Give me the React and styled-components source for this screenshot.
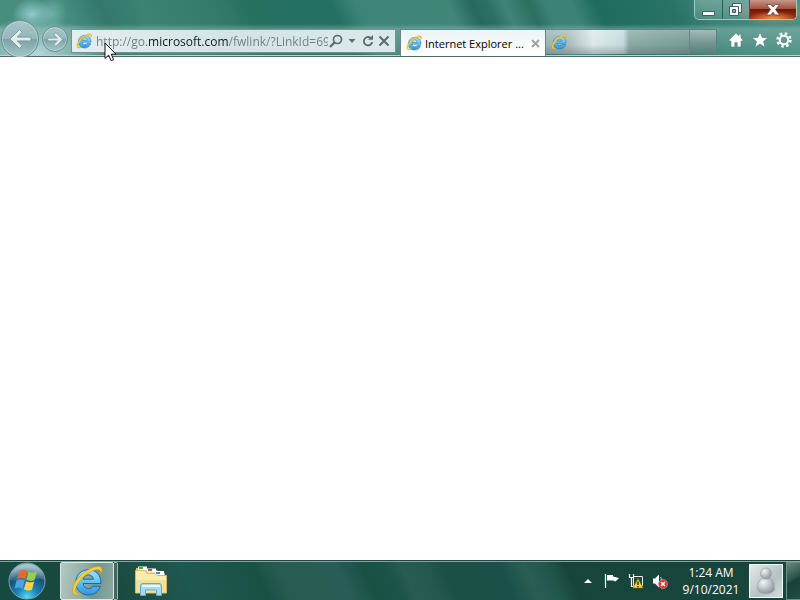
import styled, { createGlobalStyle } from 'styled-components';

const GlobalStyle = createGlobalStyle`
  * {
    box-sizing: border-box;
  }

  body {
    margin: 0;
    font-family: 'Open Sans', 'Noto Sans', sans-serif;
    font-size: 12px;
    background: #fff;
  }

  button,
  input {
    margin: 0;
    padding: 0;
    border: 0;
    background: none;
    font: inherit;
    color: inherit;
  }

  svg {
    display: block;
    flex: none;
  }
`;

const Desktop = styled.div`
  display: flex;
  flex-direction: column;
  height: 100vh;
  overflow: hidden;
`;

const Chrome = styled.header`
  flex: none;
  border-bottom: 1px solid #4e6c70;
  box-shadow: inset 0 -1px #b9d3d2;
  background:
    radial-gradient(ellipse 20px 16px at 32px 14px, rgba(170, 222, 232, 0.75), transparent),
    radial-gradient(ellipse 16px 18px at 52px 14px, rgba(160, 210, 216, 0.5), transparent),
    radial-gradient(ellipse 70px 36px at 36px 54px, rgba(200, 226, 230, 0.85), transparent),
    radial-gradient(ellipse 40px 14px at 773px 12px, rgba(226, 140, 110, 0.6), transparent),
    linear-gradient(to bottom, transparent 24px, rgba(165, 196, 195, 0.4) 29px, rgba(165, 196, 195, 0.1) 100%),
    linear-gradient(
      65deg,
      #4a9080 0%,
      #438b7c 11%,
      #33786a 15%,
      #3c8374 20%,
      #347a6b 29%,
      #25705f 33%,
      #247062 43%,
      #3c8477 46%,
      #418778 57%,
      #28695e 60%,
      #2c7063 62%,
      #3f8476 64%,
      #2b6f61 67%,
      #3c8275 69%,
      #3c8376 72%,
      #1f6c5d 75%,
      #277263 84%,
      #3b8376 88%,
      #4b8f83 100%
    );
`;

const TitleBar = styled.div`
  display: flex;
  justify-content: flex-end;
  height: 28px;
  padding-right: 3px;
`;

const WindowControls = styled.div`
  display: flex;
  height: 20px;
  border: 1px solid #a3c7be;
  border-top: 0;
  border-radius: 0 0 5px 5px;
  overflow: hidden;
`;

const WindowButton = styled.button`
  display: flex;
  align-items: center;
  justify-content: center;
  width: ${({ $close }) => ($close ? '47px' : '27px')};
  border-left: ${({ $first }) => ($first ? '0' : '1px solid #2c5e56')};
  background: ${({ $close }) =>
    $close
      ? 'radial-gradient(ellipse 24px 8px at 50% 100%, #ef9a51, transparent), linear-gradient(#c7968a, #a4533f 45%, #701708 50%, #a63218)'
      : 'linear-gradient(rgba(255, 255, 255, 0.25), rgba(255, 255, 255, 0.1))'};
`;

const NavRow = styled.div`
  display: flex;
  align-items: flex-start;
  height: 28px;
`;

const History = styled.div`
  display: flex;
  align-items: center;
  gap: 3px;
  flex: none;
  width: 71px;
  height: 28px;
  padding-left: 1px;
  margin-top: -3px;
`;

const RoundButton = styled.button`
  display: flex;
  align-items: center;
  justify-content: center;
  flex: none;
  width: ${({ $size }) => $size}px;
  height: ${({ $size }) => $size}px;
  border: 1px solid #668f90;
  border-radius: 50%;
  box-shadow: inset 0 0 0 1px rgba(220, 235, 235, 0.45);
  background: linear-gradient(#a9c5c8 0%, #95b7bb 50%, #7ba3a7 51%, #a6c6c8 100%);
`;

const AddressBar = styled.form`
  display: flex;
  align-items: center;
  flex: 315 1 0;
  min-width: 0;
  height: 24px;
  margin: 1px 4px 0 0;
  padding: 0 3px 0 4px;
  border: 1px solid #6f9492;
  background: linear-gradient(90deg, #e4edf0, #d3e4e6 50%, #dce9eb);
`;

const AddressInput = styled.input`
  flex: 1;
  min-width: 0;
  height: 20px;
  margin-left: 4px;
  font-size: 12px;
  outline: 0;
  color: transparent;
  background: linear-gradient(90deg, #737d80 52px, #10181a 52px, #10181a 132px, #737d80 132px);
  background-clip: text;
`;

const AddressButton = styled.button`
  display: flex;
  align-items: center;
  justify-content: center;
  width: 16px;
  height: 20px;
`;

const Tabs = styled.div`
  display: flex;
  flex: 316 1 0;
  min-width: 0;
  height: 27px;
  margin-top: 1px;
`;

const Tab = styled.div`
  display: flex;
  align-items: center;
  flex: 134 1 0;
  min-width: 0;
  height: ${({ $active }) => ($active ? '27px' : '25px')};
  padding: 0 5px;
  border: 1px solid #65858a;
  border-width: 1px 1px 0 ${({ $active }) => ($active ? '1px' : '0')};
  background: ${({ $active }) =>
    $active
      ? 'linear-gradient(#ecf4f5, #fff)'
      : 'linear-gradient(rgba(255, 255, 255, 0.2), transparent 60%, rgba(70, 90, 90, 0.35)), linear-gradient(90deg, #9ab3b3 0%, #a8babb 15%, #dce8ea 33%, #c5d9dd 54%, #8aaaa6 58%, #769a94 100%)'};
`;

const TabTitle = styled.button`
  flex: 1;
  min-width: 0;
  height: 24px;
  margin-left: 3px;
  overflow: hidden;
  font-size: 11px;
  text-align: left;
  white-space: nowrap;
  color: #000;
`;

const NewTab = styled.button`
  flex: 26 1 0;
  height: 25px;
  border: 1px solid #5d817d;
  border-width: 1px 1px 0 0;
  background: linear-gradient(#a2bbb7, #70938d 60%, #567f77);
`;

const Tools = styled.div`
  display: flex;
  flex: none;
  gap: 8px;
  padding: 4px 8px 0 11px;
`;

const ToolButton = styled.button`
  width: 16px;
  height: 16px;
`;

const Page = styled.main`
  flex: 1;
  background: #fff;
`;

const Taskbar = styled.footer`
  display: flex;
  align-items: center;
  flex: none;
  height: 40px;
  border-top: 1px solid #1d4741;
  box-shadow: inset 0 1px #83a6a0;
  background: linear-gradient(
    65deg,
    #164a40 0%,
    #19493f 14%,
    #1f584f 24%,
    #1a5145 33%,
    #285c52 36%,
    #2a5d55 43%,
    #1a5145 46%,
    #1b5348 49%,
    #285b51 51%,
    #25584e 54%,
    #1a5045 56%,
    #1b5048 63%,
    #2a5e55 66%,
    #20554a 69%,
    #17443b 71%,
    #18463d 100%
  );
`;

const StartButton = styled.button`
  margin-left: 8px;
`;

const TaskButton = styled.button`
  display: flex;
  align-items: center;
  justify-content: center;
  width: 54px;
  height: 38px;
  margin-left: ${({ $active }) => ($active ? '14px' : '6px')};
  border: ${({ $active }) => ($active ? '1px solid #dde8e4' : '1px solid transparent')};
  border-radius: 2px;
  background: ${({ $active }) =>
    $active ? 'linear-gradient(100deg, #b4c9c3 0%, #90aca4 45%, #73968e 65%, #8ba9a2 100%)' : 'none'};
`;

const TaskStack = styled.span`
  width: 4px;
  height: 38px;
  border: 1px solid #9db8b2;
  border-left: 0;
  border-radius: 0 2px 2px 0;
  background: #41685f;
`;

const Tray = styled.div`
  display: flex;
  align-items: center;
  gap: 8px;
  margin-left: auto;
`;

const TrayButton = styled.button`
  width: 16px;
  height: 16px;
`;

const Clock = styled.button`
  width: 66px;
  margin: 0 5px 0 2px;
  font-size: 12px;
  line-height: 17px;
  text-align: center;
  white-space: nowrap;
  color: #fff;
`;

const UserTile = styled.button`
  width: 34px;
  height: 34px;
  border: 1px solid #f3f7f7;
  background: linear-gradient(135deg, #e4e8e9, #b6c1c4 60%, #d5dcdd);
`;

const ShowDesktop = styled.button`
  width: 14px;
  height: 38px;
  margin-left: 3px;
  border: 1px solid #6e8f88;
  border-right: 0;
  background: linear-gradient(150deg, #688780, #2a5149 45%, #18413a 50%, #204d44);
`;

const Pointer = styled.svg`
  position: absolute;
  top: 42px;
  left: 104px;
  pointer-events: none;
`;

const IeLogo = ({ size }) => (
  <svg width={size} height={size} viewBox="0 0 32 32" aria-hidden="true">
    <defs>
      <linearGradient id="ieBlue" x1="0" y1="0" x2="0" y2="1">
        <stop offset="0" stopColor="#a5e5fc" />
        <stop offset="0.5" stopColor="#5cc2f2" />
        <stop offset="1" stopColor="#2f93dc" />
      </linearGradient>
    </defs>
    <path
      d="M30 18.500H12.200C12.500 21.800 14.500 23.500 17.500 23.500c2 0 3.600-.7 4.400-2.300h7.400C27.700 26.700 23.200 30 17.300 30 10 30 4.800 24.900 4.800 17.400 4.800 10 10 4.800 17.300 4.800 24.800 4.800 30.300 10 30 18.500zM12.300 14.200h10.100c-.4-2.700-2.200-4.300-5-4.300s-4.700 1.700-5.100 4.300z"
      fill="url(#ieBlue)"
      stroke="#1668ac"
      strokeWidth="1"
    />
    <path
      d="M3.500 29.500C-1 25.500 3.500 15 12 8.300 19.500 2.300 28.500-.5 30.500 3c1 2 .2 4.300-1 6.500.3-2.500.2-4-1.300-4.600C25 3.800 18.500 6.500 13 11.500 6.500 17.500 3 24.500 5 27.500c1.200 1.500 3.500 1 6 0-2.800 2.300-5.800 3.300-7.500 2z"
      fill="#fbcf36"
      stroke="#c99319"
      strokeWidth="0.6"
    />
  </svg>
);

const Arrow = ({ size, flip }) => (
  <svg width={size} height={size} viewBox="0 0 24 24" aria-hidden="true">
    <path
      d="M11.500 2.500 2 12l9.500 9.500 2.600-2.700-4.800-4.900H23v-3.800H9.300l4.800-4.900z"
      transform={flip ? 'matrix(-1 0 0 1 24 0)' : undefined}
      fill="#e2ecec"
      stroke="#6b9195"
      strokeWidth="0.8"
    />
  </svg>
);

const StartOrb = () => (
  <svg width="38" height="38" viewBox="0 0 38 38" aria-hidden="true">
    <defs>
      <radialGradient id="orb" cx="0.5" cy="0.95" r="0.85">
        <stop offset="0" stopColor="#54dbf2" />
        <stop offset="0.35" stopColor="#1b83bb" />
        <stop offset="0.75" stopColor="#174e74" />
        <stop offset="1" stopColor="#58879a" />
      </radialGradient>
      <linearGradient id="orbShine" x1="0" y1="0" x2="0" y2="1">
        <stop offset="0" stopColor="#e6f1f3" stopOpacity="0.65" />
        <stop offset="1" stopColor="#c9dfe6" stopOpacity="0.1" />
      </linearGradient>
    </defs>
    <circle cx="19" cy="19" r="18" fill="url(#orb)" stroke="#7ea9b1" strokeWidth="1" />
    <path d="M2 18C2 8 9.500 2 19 2s17 6 17 16c-8-4-15 4-34 0z" fill="url(#orbShine)" />
    <path d="M11.500 8.800c3-1.600 5.400-1.300 7.900.2l-2.200 8.200c-2.600-1.500-5.100-1.600-8.100-.3z" fill="#ee6530" />
    <path d="M20.600 9.600c2.700 1.500 5.300 1.500 8.400 0l-2.400 8.500c-3 1.300-5.500 1.100-8.100-.3z" fill="#9ccc4b" />
    <path d="M8.700 18.300c3-1.300 5.600-1.100 8.100.3l-2.200 8.200c-2.500-1.500-5.100-1.700-8.100-.3z" fill="#4da3e0" />
    <path d="M18.100 19.200c2.700 1.500 5.200 1.500 8.200.3L24 27.700c-3 1.300-5.600 1.100-8.100-.3z" fill="#fdd246" />
  </svg>
);

const Folder = () => (
  <svg width="34" height="32" viewBox="0 0 34 32" aria-hidden="true">
    <path d="M2 3h10l2 2h9l2 3h6v6H2z" fill="#e0bd62" />
    <path d="M4 1.500h9v4H4zM13 3.500h9v4h-9zM21 6h9v4h-9z" fill="#fff" />
    <path d="M5 2h4v2H5z" fill="#3fa655" />
    <path d="M14 4h4v2h-4z" fill="#cf4936" />
    <path d="M22 7h4v2h-4z" fill="#3988c8" />
    <path d="M1.500 5.500h9l2.500 3h8l2 2h9.500V28h-31z" fill="#f9ecb0" stroke="#d8b95e" />
    <path d="M2 15h30v12.500H2z" fill="#f1dc8d" opacity="0.7" />
    <path d="M6.500 30.500V21c0-1.700 1-2.500 2.500-2.500h16c1.500 0 2.500.8 2.500 2.500v9.500h-5V25h-11v5.500z" fill="#a9d8ee" stroke="#68a7c8" />
    <path d="M8 21h18" stroke="#e8f7fd" strokeWidth="2" />
  </svg>
);

const WindowIcon = ({ children }) => (
  <svg width="16" height="16" viewBox="0 0 16 16" aria-hidden="true">
    {children}
  </svg>
);

const App = () => {
  return (
    <>
      <GlobalStyle />
      <Desktop>
        <Chrome>
          <TitleBar>
            <WindowControls>
              <WindowButton $first aria-label="Minimize">
                <WindowIcon>
                  <path d="M1.500 9.500h12v4h-12z" fill="#f4f8f8" stroke="#41605f" />
                </WindowIcon>
              </WindowButton>
              <WindowButton aria-label="Restore">
                <WindowIcon>
                  <path d="M4.500 1.500h9v9h-9z" fill="#f4f8f8" stroke="#41605f" />
                  <path d="M1.500 4.500h9v9h-9z" fill="#f4f8f8" stroke="#41605f" />
                  <path d="M4.500 7.500h3v3h-3z" fill="#78a39d" stroke="#41605f" />
                </WindowIcon>
              </WindowButton>
              <WindowButton $close aria-label="Close">
                <WindowIcon>
                  <path
                    d="M1.500 2.500h4.300L8 5l2.200-2.500h4.300l-4 5 4 5.500h-4.300L8 10.200 5.800 13H1.500l4-5.500z"
                    fill="#fff"
                    stroke="#5e4a4a"
                    strokeWidth="0.8"
                  />
                </WindowIcon>
              </WindowButton>
            </WindowControls>
          </TitleBar>
          <NavRow>
            <History>
              <RoundButton $size={38} aria-label="Back">
                <Arrow size={24} />
              </RoundButton>
              <RoundButton $size={26} aria-label="Forward">
                <Arrow size={17} flip />
              </RoundButton>
            </History>
            <AddressBar onSubmit={(e) => e.preventDefault()}>
              <IeLogo size={16} />
              <AddressInput
                type="text"
                aria-label="Address"
                spellCheck={false}
                defaultValue="http://go.microsoft.com/fwlink/?LinkId=69157"
              />
              <AddressButton type="submit" aria-label="Search">
                <svg width="14" height="14" viewBox="0 0 14 14">
                  <circle cx="8.500" cy="5.500" r="4" fill="none" stroke="#596c70" strokeWidth="1.700" />
                  <path d="M5.500 8.500 1 13" stroke="#596c70" strokeWidth="2.300" />
                </svg>
              </AddressButton>
              <AddressButton type="button" aria-label="Show address bar history">
                <svg width="8" height="8" viewBox="0 0 8 8">
                  <path d="M0.500 2h7L4 6z" fill="#596c70" />
                </svg>
              </AddressButton>
              <AddressButton type="button" aria-label="Refresh">
                <svg width="12" height="12" viewBox="0 0 12 12">
                  <path d="M8.500 2.800A4.200 4.200 0 1 0 10.200 7" fill="none" stroke="#596c70" strokeWidth="1.800" />
                  <path d="M6 4.700h5V0z" fill="#596c70" />
                </svg>
              </AddressButton>
              <AddressButton type="button" aria-label="Stop">
                <svg width="12" height="12" viewBox="0 0 12 12">
                  <path d="m1.500 1.500 9 9m0-9-9 9" stroke="#596c70" strokeWidth="2" />
                </svg>
              </AddressButton>
            </AddressBar>
            <Tabs>
              <Tab $active>
                <IeLogo size={16} />
                <TabTitle>Internet Explorer ...</TabTitle>
                <button aria-label="Close tab">
                  <svg width="9" height="9" viewBox="0 0 9 9">
                    <path d="m1 1 7 7m0-7L1 8" stroke="#9da3a5" strokeWidth="2" />
                  </svg>
                </button>
              </Tab>
              <Tab>
                <IeLogo size={16} />
                <TabTitle aria-label="Loading tab" />
              </Tab>
              <NewTab aria-label="New tab" />
            </Tabs>
            <Tools>
              <ToolButton aria-label="Home">
                <svg width="16" height="16" viewBox="0 0 16 16">
                  <path
                    d="M8 1 .8 8.300l1.300 1.200.9-.8V15h3.800v-4.500h2.400V15H13V8.700l.9.800 1.300-1.200L13 6V2h-2v2z"
                    fill="#fff"
                    stroke="#4f8179"
                    strokeWidth="0.600"
                  />
                </svg>
              </ToolButton>
              <ToolButton aria-label="Favorites">
                <svg width="16" height="16" viewBox="0 0 16 16">
                  <path
                    d="m8 0 2.200 5.500 5.800.2-4.500 3.700 1.600 5.900L8 12l-5.100 3.300 1.600-5.900L0 5.700l5.800-.2z"
                    fill="#fff"
                    stroke="#4f8179"
                    strokeWidth="0.600"
                  />
                </svg>
              </ToolButton>
              <ToolButton aria-label="Tools">
                <svg width="16" height="16" viewBox="0 0 16 16">
                  <circle cx="8" cy="8" r="6.500" fill="none" stroke="#fff" strokeWidth="2.400" strokeDasharray="2.550" />
                  <circle cx="8" cy="8" r="4.200" fill="none" stroke="#fff" strokeWidth="2" />
                </svg>
              </ToolButton>
            </Tools>
          </NavRow>
        </Chrome>
        <Page />
        <Taskbar>
          <StartButton aria-label="Start">
            <StartOrb />
          </StartButton>
          <TaskButton $active aria-label="Internet Explorer">
            <IeLogo size={32} />
          </TaskButton>
          <TaskStack />
          <TaskButton aria-label="Windows Explorer">
            <Folder />
          </TaskButton>
          <Tray>
            <TrayButton aria-label="Show hidden icons">
              <svg width="16" height="16" viewBox="0 0 16 16">
                <path d="M4 10h8L8 6z" fill="#fff" />
              </svg>
            </TrayButton>
            <TrayButton aria-label="Action Center">
              <svg width="16" height="16" viewBox="0 0 16 16">
                <path d="M1.500 1v14" stroke="#fff" strokeWidth="1.200" />
                <path d="M3 2h6v1.500L15 5l-3.500 3.500L9 7.500H3z" fill="#fff" />
              </svg>
            </TrayButton>
            <TrayButton aria-label="Network">
              <svg width="16" height="16" viewBox="0 0 16 16">
                <path d="M5.500 3.500h9v9h-9z" fill="#27453f" stroke="#e6eeee" />
                <path d="M1.500 1v3.500h4V1M3.500 4v9.500H8" fill="none" stroke="#fff" strokeWidth="1.200" />
                <path d="m10 5.500 5 9.500H5z" fill="#f8d521" stroke="#876e0e" strokeWidth="0.500" />
                <path d="M10 8.500v3.500m0 1v1.200" stroke="#222" strokeWidth="1.400" />
              </svg>
            </TrayButton>
            <TrayButton aria-label="Volume muted">
              <svg width="16" height="16" viewBox="0 0 16 16">
                <path d="M1 5.500h2L7 1.500v13l-4-4H1z" fill="#fff" />
                <path d="M8.500 4c1.500 2 1.500 6 0 8" fill="none" stroke="#cfdedb" />
                <circle cx="11" cy="11" r="4.500" fill="#dc3030" stroke="#f2a29d" strokeWidth="0.600" />
                <path d="m9 9 4 4m0-4-4 4" stroke="#fff" strokeWidth="1.500" />
              </svg>
            </TrayButton>
            <Clock>
              1:24 AM
              <br />
              9/10/2021
            </Clock>
          </Tray>
          <UserTile aria-label="User account">
            <svg width="32" height="32" viewBox="0 0 32 32">
              <defs>
                <radialGradient id="pawn" cx="0.35" cy="0.3" r="0.8">
                  <stop offset="0" stopColor="#f4f6f7" />
                  <stop offset="1" stopColor="#838e94" />
                </radialGradient>
              </defs>
              <path
                d="M12 13c-3 2-4.500 6-4.500 10 0 4 4 5.500 8.500 5.500s8.500-1.500 8.500-5.500c0-4-1.500-8-4.500-10z"
                fill="url(#pawn)"
                stroke="#939da1"
                strokeWidth="0.600"
              />
              <circle cx="16" cy="8.500" r="5.500" fill="url(#pawn)" stroke="#939da1" strokeWidth="0.600" />
            </svg>
          </UserTile>
          <ShowDesktop aria-label="Show desktop" />
        </Taskbar>
      </Desktop>
      <Pointer width="13" height="20" viewBox="0 0 13 20">
        <path d="M1 1v15.500l3.600-3.400 2.600 5.700 2.500-1.100-2.500-5.500H12z" fill="#fff" stroke="#111" />
      </Pointer>
    </>
  );
};

export default App;
